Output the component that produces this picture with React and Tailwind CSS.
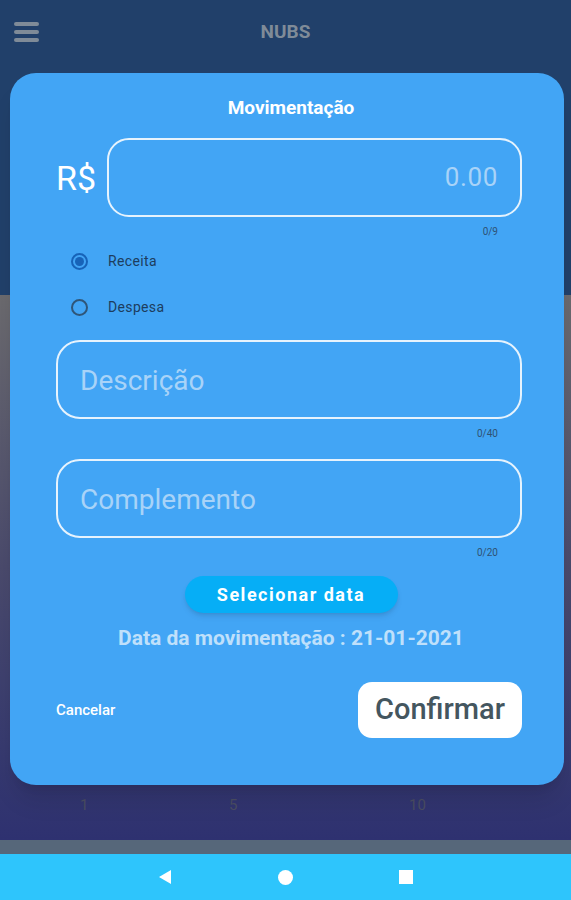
import React, { useState } from "react";

function Radio({ checked, label, onClick }) {
  return (
    <div className="flex items-center h-[46px] cursor-pointer" onClick={onClick}>
      <div
        className={
          "w-[17px] h-[17px] ml-[15px] rounded-full border-2 flex items-center justify-center " +
          (checked ? "border-[#1763b8]" : "border-[#2f5679]")
        }
      >
        {checked && <div className="w-[9px] h-[9px] rounded-full bg-[#1763b8]" />}
      </div>
      <span className="ml-[20px] text-[14px] text-[#1d3d5e] tracking-wide">{label}</span>
    </div>
  );
}

function App() {
  const [tipo, setTipo] = useState("receita");

  return (
    <div className="relative w-[571px] h-[900px] overflow-hidden flex flex-col font-['Roboto',sans-serif]">
      {/* header behind the dialog */}
      <div className="h-[295px] bg-[#21406a] shrink-0">
        <div className="flex items-center h-[64px] px-[14px]">
          <div className="flex flex-col gap-[4px] w-[25px]">
            <div className="h-[4px] bg-[#7f8b98] rounded-sm" />
            <div className="h-[4px] bg-[#7f8b98] rounded-sm" />
            <div className="h-[4px] bg-[#7f8b98] rounded-sm" />
          </div>
          <div className="flex-1 text-center pr-[25px] text-[19px] font-bold text-[#7f8b98]">NUBS</div>
        </div>
      </div>

      {/* chart area */}
      <div className="flex-1 bg-gradient-to-b from-[#6b6a6e] via-[#4a4a6c] to-[#2e3170] flex flex-col justify-end">
        <div className="relative h-[50px] mb-[4px] text-[15px] text-[#4a4d62]">
          <span className="absolute left-[80px] top-[8px]">1</span>
          <span className="absolute left-[229px] top-[8px]">5</span>
          <span className="absolute left-[409px] top-[8px]">10</span>
        </div>
      </div>
      <div className="h-[14px] bg-[#56677a] shrink-0" />

      {/* android nav bar */}
      <div className="h-[46px] bg-[#2ec5fc] shrink-0 flex items-center justify-center gap-[106px]">
        <svg width="14" height="16" viewBox="0 0 14 16">
          <path d="M13 1 L1 8 L13 15 Z" fill="white" />
        </svg>
        <div className="w-[15px] h-[15px] rounded-full bg-white" />
        <div className="w-[14px] h-[14px] bg-white" />
      </div>

      {/* dialog */}
      <div className="absolute left-[10px] top-[73px] w-[554px] h-[712px] bg-[#42a5f5] rounded-[26px] shadow-xl pl-[46px] pr-[42px] flex flex-col">
        <h1 className="text-center text-[19px] font-bold text-white mt-[23px] leading-[24px] pl-[4px]">
          Movimentação
        </h1>

        <div className="flex items-center mt-[18px]">
          <span className="text-[34px] text-white w-[51px] pt-[2px]">R$</span>
          <div className="flex-1 h-[79px] border-2 border-[#e6f3fd] rounded-[22px] flex items-center justify-end pr-[22px]">
            <span className="text-[26px] text-[#a8d3f8] tracking-wide">0.00</span>
          </div>
        </div>
        <div className="text-right pr-[24px] text-[10px] text-[#2f5274] mt-[9px] leading-[12px]">0/9</div>

        <Radio checked={tipo === "receita"} label="Receita" onClick={() => setTipo("receita")} />
        <Radio checked={tipo === "despesa"} label="Despesa" onClick={() => setTipo("despesa")} />

        <div className="mt-[10px] h-[79px] border-2 border-[#e6f3fd] rounded-[24px] flex items-center pl-[22px]">
          <span className="text-[28px] text-[#a8d3f8] pt-[2px]">Descrição</span>
        </div>
        <div className="text-right pr-[24px] text-[10px] text-[#2f5274] mt-[9px] leading-[12px]">0/40</div>

        <div className="mt-[19px] h-[79px] border-2 border-[#e6f3fd] rounded-[24px] flex items-center pl-[22px]">
          <span className="text-[28px] text-[#a8d3f8] pt-[2px]">Complemento</span>
        </div>
        <div className="text-right pr-[24px] text-[10px] text-[#2f5274] mt-[9px] leading-[12px]">0/20</div>

        <div className="flex justify-center mt-[17px] pl-[4px]">
          <button className="w-[213px] h-[37px] rounded-full bg-[#06aef6] shadow-md text-white font-bold text-[18px] tracking-[1.5px]">
            Selecionar data
          </button>
        </div>

        <div className="text-center text-[21px] font-bold text-[#bfe0fb] mt-[12px] leading-[26px] pl-[4px]">
          Data da movimentação : 21-01-2021
        </div>

        <div className="flex items-center justify-between mt-[31px]">
          <span className="text-[15px] text-white font-medium">Cancelar</span>
          <button className="w-[164px] h-[56px] bg-white rounded-[14px] text-[29px] font-medium text-[#44565f]">
            Confirmar
          </button>
        </div>
      </div>
    </div>
  );
}

export default App;
